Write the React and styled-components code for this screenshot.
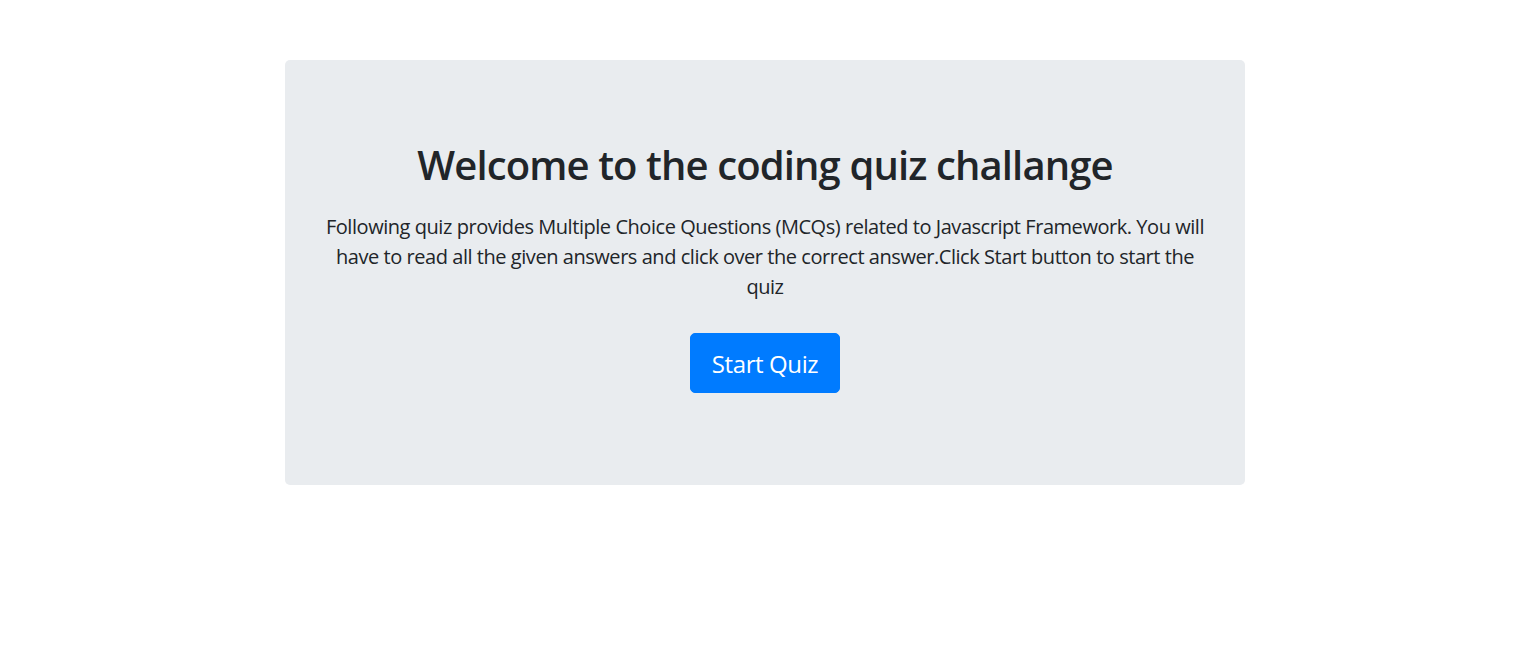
import styled, { createGlobalStyle } from "styled-components";

const GlobalStyle = createGlobalStyle`
  body {
    margin: 0;
    background: #fff;
    font-family: "Open Sans", "Noto Sans", sans-serif;
    color: #212529;
  }
`;

const Page = styled.div`
  display: flex;
  justify-content: center;
  padding: 60px 8px 0 0;
`;

const Jumbotron = styled.section`
  width: 960px;
  box-sizing: border-box;
  padding: 81px 32px 92px;
  background: #e9ecef;
  border-radius: 5px;
  text-align: center;
  display: flex;
  flex-direction: column;
  align-items: center;
`;

const Title = styled.h1`
  margin: 0 0 23px;
  font-size: 40px;
  line-height: 48px;
  font-weight: 600;
  letter-spacing: -0.88px;
`;

const Lead = styled.p`
  max-width: 882px;
  margin: 0 0 31px;
  font-size: 20px;
  line-height: 30px;
  font-weight: 400;
  letter-spacing: -0.45px;
`;

const StartButton = styled.button`
  font-family: inherit;
  font-size: 24px;
  line-height: 36px;
  letter-spacing: -0.4px;
  padding: 12px 21px 10px;
  color: #fff;
  background: #007bff;
  border: 1px solid #007bff;
  border-radius: 5px;
  cursor: pointer;
`;

const App = () => {
  return (
    <>
      <GlobalStyle />
      <Page>
        <Jumbotron>
          <Title>Welcome to the coding quiz challange</Title>
          <Lead>
            Following quiz provides Multiple Choice Questions (MCQs) related to
            Javascript Framework. You will have to read all the given answers
            and click over the correct answer.Click Start button to start the
            quiz
          </Lead>
          <StartButton type="button">Start Quiz</StartButton>
        </Jumbotron>
      </Page>
    </>
  );
};

export default App;
